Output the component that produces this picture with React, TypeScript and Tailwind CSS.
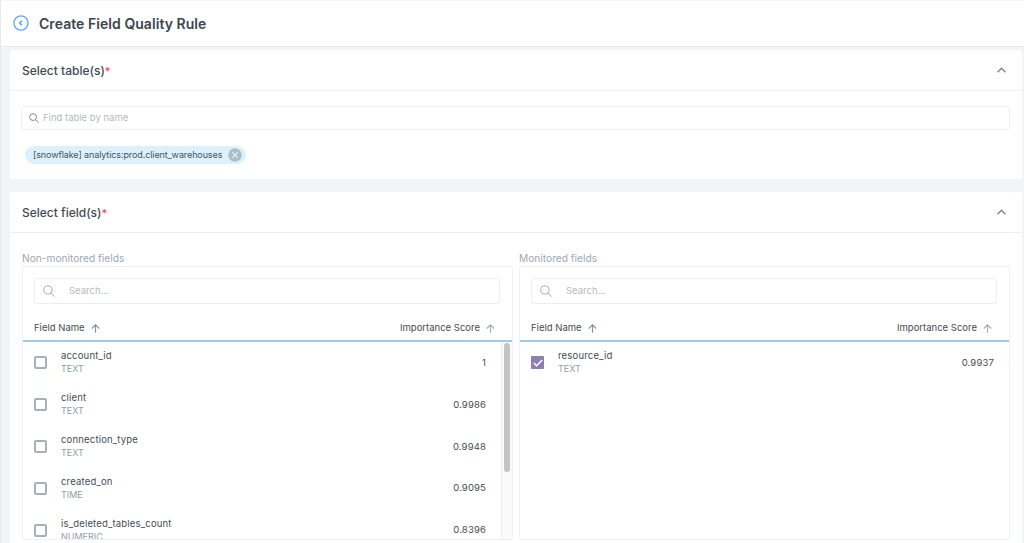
import { useState } from "react";

type Field = {
  name: string;
  type: string;
  score: string;
};

const nonMonitored: Field[] = [
  { name: "account_id", type: "TEXT", score: "1" },
  { name: "client", type: "TEXT", score: "0.9986" },
  { name: "connection_type", type: "TEXT", score: "0.9948" },
  { name: "created_on", type: "TIME", score: "0.9095" },
  { name: "is_deleted_tables_count", type: "NUMERIC", score: "0.8396" },
];

const monitored: Field[] = [
  { name: "resource_id", type: "TEXT", score: "0.9937" },
];

function SearchIcon({ className }: { className: string }) {
  return (
    <svg viewBox="0 0 12 12" fill="none" stroke="currentColor" className={className}>
      <circle cx="4.9" cy="4.9" r="4.1" />
      <path d="M7.9 7.9 11.6 11.6" />
    </svg>
  );
}

function SortArrow({ className }: { className: string }) {
  return (
    <svg
      viewBox="0 0 10 10"
      fill="none"
      stroke="currentColor"
      strokeWidth="1.3"
      className={className}
    >
      <path d="M5 9.8V1M0.9 5 5 0.9 9.1 5" />
    </svg>
  );
}

function SectionHeader({ title }: { title: string }) {
  return (
    <div className="flex h-[41px] items-center justify-between border-b border-[#edf0f2] pl-3 pr-4">
      <h2 className="pt-px text-[12px] font-medium text-[#3f4a54]">
        {title}
        <span className="text-[11px] text-[#f5424b]">*</span>
      </h2>
      <svg
        viewBox="0 0 9 6"
        fill="none"
        stroke="#868686"
        strokeWidth="1.5"
        className="h-1.5 w-[9px]"
      >
        <path d="M0.6 5.2 4.5 1.2 8.4 5.2" />
      </svg>
    </div>
  );
}

function FieldRow({ field, checked }: { field: Field; checked: boolean }) {
  const [selected, setSelected] = useState(checked);

  return (
    <div className="flex h-[41.9px] shrink-0 items-center">
      <button
        className={
          selected
            ? "flex size-[13px] items-center justify-center rounded-[1px] bg-[#8e7fae]"
            : "size-[13px] rounded-[2px] border-2 border-[#a5b0ba]"
        }
        onClick={() => setSelected(!selected)}
      >
        {selected && (
          <svg viewBox="0 0 10 8" fill="none" stroke="white" strokeWidth="1.5" className="h-2 w-2.5">
            <path d="M0.8 4 3.6 6.8 9.2 1" />
          </svg>
        )}
      </button>
      <div className="ml-3.5 grow pb-0.5 leading-[13px]">
        <p className="text-[9.5px] tracking-[0.18px] text-[#444d55]">{field.name}</p>
        <p className="text-[9px] text-[#929da7]">{field.type}</p>
      </div>
      <p className="text-[9.5px] tracking-[0.15px] text-[#444d55]">{field.score}</p>
    </div>
  );
}

type PanelProps = {
  title: string;
  fields: Field[];
  checked?: boolean;
  scrollable?: boolean;
};

function FieldPanel({ title, fields, checked = false, scrollable = false }: PanelProps) {
  return (
    <div className="w-[491px]">
      <p className="h-[15px] text-[10.2px] leading-[15px] text-[#9ca8b4]">{title}</p>
      <div className="flex h-[274px] flex-col overflow-hidden rounded-[3px] border border-[#eff2f4]">
        <label className="ml-[11px] mr-3 mt-[11px] flex h-[26px] shrink-0 items-center gap-3.5 rounded-[3px] border border-[#edf0f2] px-2">
          <SearchIcon className="size-3 text-[#a3afba]" />
          <input
            className="grow text-[9.5px] text-[#4d565e] outline-none placeholder:text-[#b5bbc0]"
            placeholder="Search..."
          />
        </label>
        <div className="mt-[11px] flex h-[27px] shrink-0 items-center justify-between border-b-2 border-[#a0cde6] pl-[11px] pr-[17px] pt-px text-[9.5px] text-[#444d55]">
          <span className="flex items-center gap-1.5">
            <span className="pt-px">Field Name</span>
            <SortArrow className="size-[9px] text-[#8893a0]" />
          </span>
          <span className="flex items-center gap-1.5">
            <span className="pt-px">Importance Score</span>
            <SortArrow className="size-[9px] text-[#a8adb2]" />
          </span>
        </div>
        <div className="flex min-h-0 grow">
          <div className="flex grow flex-col overflow-hidden pl-[11px] pr-[15px]">
            {fields.map((field) => (
              <FieldRow key={field.name} field={field} checked={checked} />
            ))}
          </div>
          {scrollable && (
            <div className="w-[11px] border-l border-[#eeeeee] bg-[#fafafa] px-0.5 pt-px">
              <div className="h-[129px] w-1.5 rounded-full bg-[#c4c4c4]" />
            </div>
          )}
        </div>
      </div>
    </div>
  );
}

export default function App() {
  const [tables, setTables] = useState(["[snowflake] analytics:prod.client_warehouses"]);

  return (
    <div className="h-[543px] overflow-hidden border-l border-[#e6eaee] bg-[#f2f5f8] font-[Inter,sans-serif] whitespace-nowrap">
      <header className="flex h-[47px] items-center gap-2.5 border-b border-t border-b-[#e3e9ef] border-t-[#f5f5f5] bg-white pb-px pl-3">
        <svg viewBox="0 0 16 16" fill="none" stroke="#62a6f2" className="size-4">
          <circle cx="8" cy="8" r="7.1" strokeWidth="1.3" />
          <path d="M9 5.7 6.7 8 9 10.3" strokeWidth="1.6" />
        </svg>
        <h1 className="text-[14px] font-semibold tracking-[0.05px] text-[#3c464f]">
          Create Field Quality Rule
        </h1>
      </header>

      <main className="flex flex-col gap-[13px] pl-[9px] pr-0.5 pt-[3px]">
        <section className="h-[129px] rounded-[2px] bg-white">
          <SectionHeader title="Select table(s)" />
          <div className="pl-[11px] pr-3 pt-[15px]">
            <label className="flex h-6 items-center gap-1 rounded-[3px] border border-[#edf0f2] pl-[7px] pr-1.5">
              <SearchIcon className="size-2.5 text-[#6f757b]" />
              <input
                className="grow pt-px text-[9.5px] text-[#4d565e] outline-none placeholder:text-[#b5bbc0]"
                placeholder="Find table by name"
              />
            </label>
            <div className="ml-1 mt-4 flex">
              {tables.map((table) => (
                <span
                  key={table}
                  className="flex h-[18px] items-center gap-1.5 rounded-full bg-[#dbf2fe] pl-2 pr-1 text-[9px] tracking-[-0.1px] text-[#46525c]"
                >
                  {table}
                  <button onClick={() => setTables(tables.filter((t) => t !== table))}>
                    <svg viewBox="0 0 14 14" className="size-3.5">
                      <circle cx="7" cy="7" r="6.8" fill="#b0bdc5" />
                      <path d="M4.4 4.4 9.6 9.6M9.6 4.4 4.4 9.6" stroke="#e3f3fb" strokeWidth="1.3" />
                    </svg>
                  </button>
                </span>
              ))}
            </div>
          </div>
        </section>

        <section className="h-[360px] rounded-[2px] bg-white">
          <SectionHeader title="Select field(s)" />
          <div className="flex gap-1.5 px-3 pt-[18px]">
            <FieldPanel title="Non-monitored fields" fields={nonMonitored} scrollable />
            <FieldPanel title="Monitored fields" fields={monitored} checked />
          </div>
        </section>
      </main>
    </div>
  );
}
